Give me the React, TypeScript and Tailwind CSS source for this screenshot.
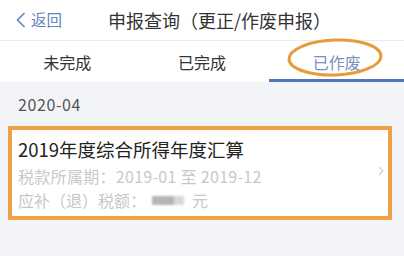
import React from "react";

export default function App() {
  return (
    <div
      className="relative w-[404px] h-[256px] overflow-hidden bg-[#f3f4f8]"
      style={{ fontFamily: '"Noto Sans CJK SC", "Noto Sans", sans-serif' }}
    >
      {/* header */}
      <div className="flex h-[41px] items-center bg-white border-b border-[#ebebeb]">
        <div className="ml-[16px] flex items-center text-[#6382c0]">
          <svg width="10" height="16" viewBox="0 0 10 16" className="mr-[5px]">
            <polyline points="8.5,1 1.5,8 8.5,15" fill="none" stroke="#6382c0" strokeWidth="1.6" />
          </svg>
          <span className="text-[15.5px] leading-none">返回</span>
        </div>
        <div className="ml-[46px] text-[18px] leading-none text-[#333]">申报查询（更正/作废申报）</div>
      </div>

      {/* tabs */}
      <div className="grid h-[41px] grid-cols-3 bg-white">
        <div className="flex items-center justify-center text-[16px] text-[#333]">未完成</div>
        <div className="flex items-center justify-center text-[16px] text-[#333]">已完成</div>
        <div className="flex items-center justify-center border-b-[3px] border-[#5177ba] pt-[3px] text-[16px] text-[#7b90bd]">
          已作废
        </div>
      </div>

      {/* date */}
      <div className="flex h-[44px] items-center pl-[18px] text-[16px] tracking-[0.6px] text-[#555]">2020-04</div>

      {/* card */}
      <div className="relative mx-[8px] w-[384px] border-[4px] border-[#eea245] bg-white pl-[6px] pt-[7px] pb-[4px]">
        <div className="text-[18.5px] leading-[24px] text-[#222]">2019年度综合所得年度汇算</div>
        <div className="mt-[3px] whitespace-pre text-[16px] leading-[24px] tracking-[0.3px] text-[#c8c8c8]">
          税款所属期：2019-01 至 2019-12
        </div>
        <div className="flex items-center text-[16px] leading-[24px] text-[#c8c8c8]">
          <span>应补（退）税额：</span>
          <span className="ml-[6px] inline-flex h-[9px] w-[32px] blur-[0.8px]">
            <span className="h-full w-[22px] bg-[#b5b5b5]" />
            <span className="h-full w-[10px] bg-[#d8d8d8]" />
          </span>
          <span className="ml-[8px]">元</span>
        </div>
        <svg
          width="8"
          height="10"
          viewBox="0 0 8 10"
          className="absolute right-[3px] top-[36px]"
        >
          <polyline points="2,1 6,5 2,9" fill="none" stroke="#cfcfcf" strokeWidth="1.2" />
        </svg>
      </div>

      {/* orange annotation ellipse */}
      <svg className="absolute left-[286px] top-[37px]" width="100" height="42" viewBox="0 0 100 42">
        <ellipse cx="49" cy="20.5" rx="46" ry="17.5" fill="none" stroke="#e99a3b" strokeWidth="3" transform="rotate(-2 49 20.5)" />
      </svg>
    </div>
  );
}
